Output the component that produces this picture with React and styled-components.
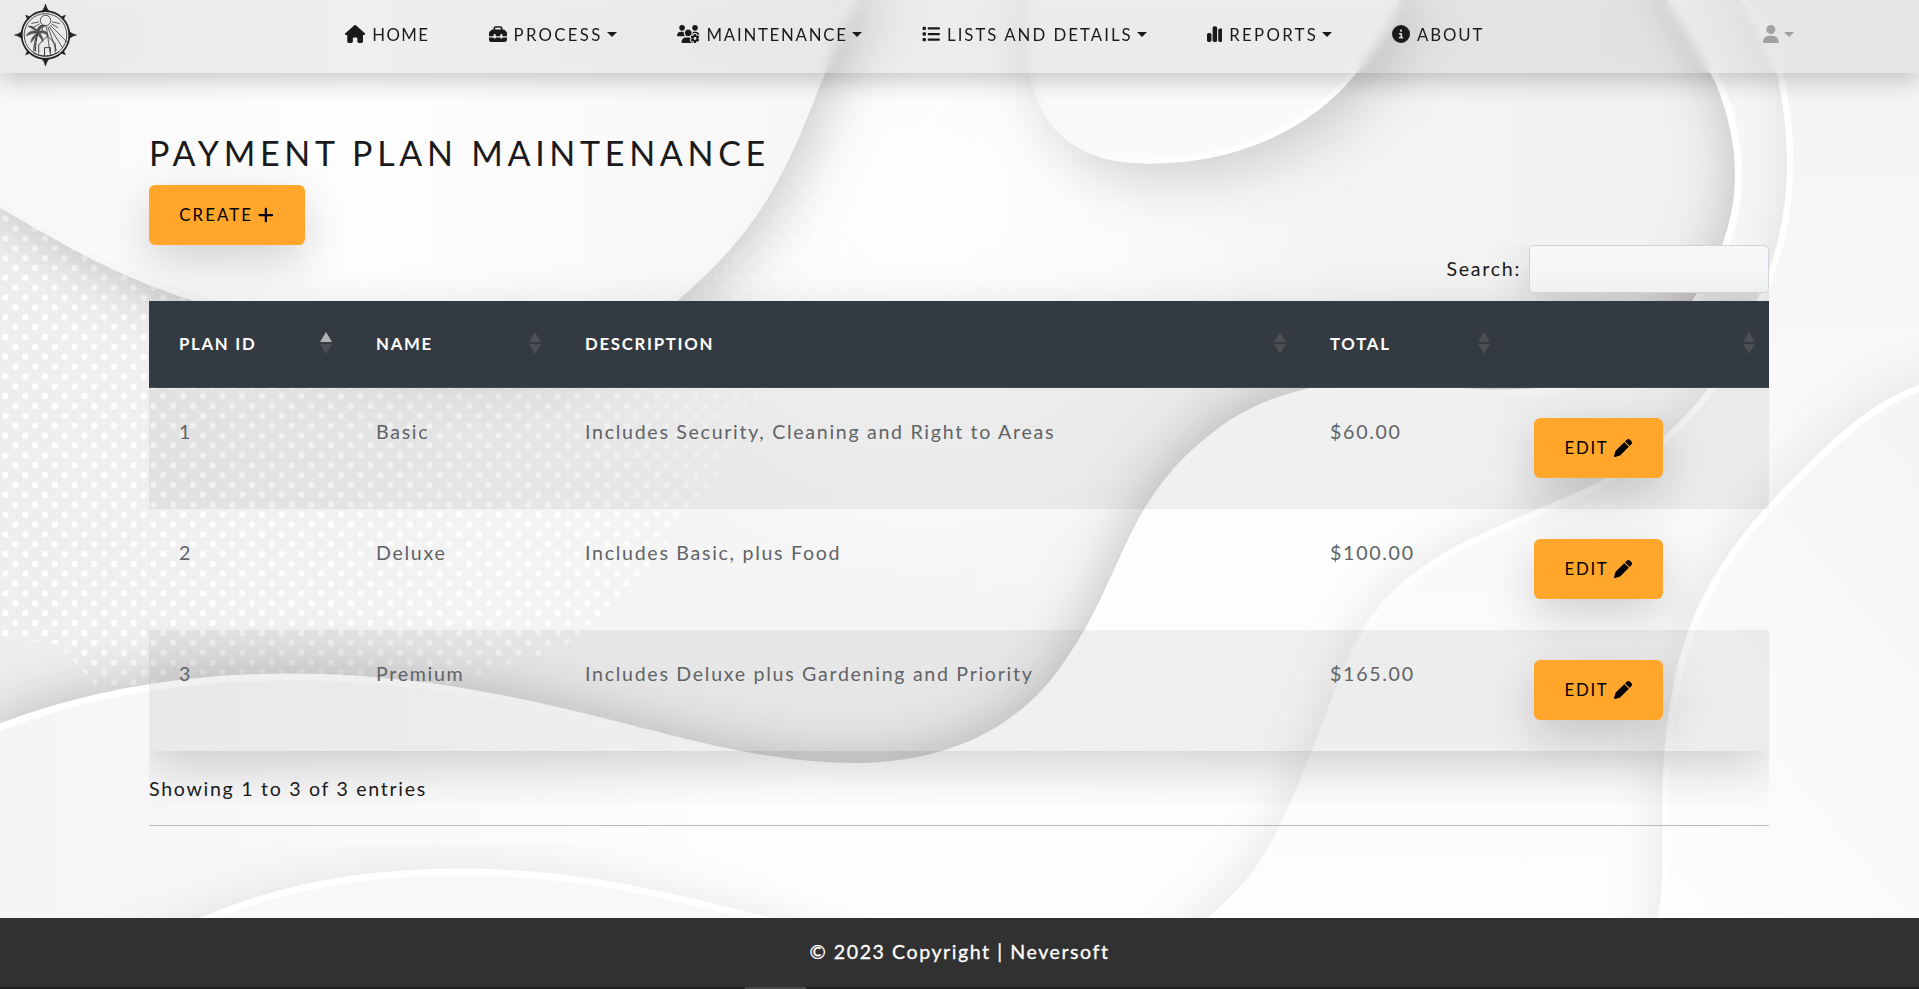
import React from "react";
import styled, { createGlobalStyle } from "styled-components";
import {
  FaHouse, FaToolbox, FaUsersGear, FaList, FaChartSimple, FaCircleInfo, FaUser, FaPlus, FaPen,
} from "react-icons/fa6";

const GlobalStyle = createGlobalStyle`
  * { box-sizing: border-box; }
  body {
    margin: 0;
    overflow: hidden;
    background: #f6f5f6;
    color: #1a1a1a;
    font-family: Lato, "Open Sans", sans-serif;
    font-size: 19.6px;
    line-height: 30px;
    letter-spacing: 1.7px;
  }
`;

const Page = styled.div`
  position: relative;
  isolation: isolate;
  display: flex;
  flex-direction: column;
  width: 1919px;
  height: 989px;
  overflow: hidden;
`;

const Backdrop = styled.svg`
  position: absolute;
  inset: 0;
  z-index: -1;
  filter { color-interpolation-filters: sRGB; }
`;

const Navbar = styled.header`
  display: flex;
  align-items: center;
  flex: none;
  height: 73px;
  padding-left: 14px;
  background: rgba(0, 0, 0, 0.06);
  backdrop-filter: blur(6px);
  box-shadow: 0 8px 22px rgba(0, 0, 0, 0.2);
`;

const Logo = styled.svg`
  display: block;
  flex: none;
  width: 63px;
  height: 64px;
  margin: 0 268px 3px 0;
`;

const NavList = styled.nav`
  display: grid;
  grid-template-columns: 143.5px 188.5px 245px 284.5px 185.5px 371px auto;
  height: 73px;
  padding-bottom: 3px;
`;

const NavItem = styled.a`
  display: flex;
  align-items: center;
  color: ${(p) => (p.$muted ? "#a1a1a1" : "#1a1a1a")};
  font-size: 16.8px;
  letter-spacing: ${(p) => p.$track || 1.7}px;
  white-space: nowrap;
  svg {
    flex: none;
    width: ${(p) => p.$icon || 18}px;
    height: 18px;
    margin: 0 ${(p) => (p.$muted ? 5 : 7)}px 2px 0;
  }
`;

const Caret = styled.span`
  margin: 0 0 1px ${(p) => (p.$tight ? 0 : 4)}px;
  border: 5px solid transparent;
  border-top-color: currentColor;
  border-bottom: 0;
`;

const Content = styled.main`
  flex: 1;
  width: 1620px;
  margin-left: 149px;
  padding-top: 60px;
`;

const Title = styled.h1`
  margin: 0;
  height: 52px;
  line-height: 40px;
  font-size: 34px;
  font-weight: 400;
  letter-spacing: 4.7px;
`;

const Button = styled.button`
  display: flex;
  align-items: center;
  justify-content: center;
  gap: ${(p) => p.$gap}px;
  width: ${(p) => p.$width}px;
  height: 60px;
  padding: 0 1px 1px 0;
  border: 0;
  border-radius: 6.4px;
  background: #ffa62b;
  color: #000;
  font: 400 16.8px Lato, sans-serif;
  letter-spacing: ${(p) => p.$track}px;
  box-shadow: 0 16px 48px rgba(0, 0, 0, 0.175);
  svg { flex: none; width: ${(p) => p.$icon}px; height: 18px; }
`;

const TableWrapper = styled.section`
  height: 560px;
  overflow: hidden;
`;

const SearchLabel = styled.label`
  display: flex;
  align-items: center;
  justify-content: flex-end;
  gap: 8px;
  height: 48px;
  margin-bottom: 8px;
  line-height: 28px;
`;

const SearchInput = styled.input`
  width: 240px;
  height: 48px;
  border: 1px solid #ced4da;
  border-radius: 5px;
  background: linear-gradient(#f6f7f9, #f5f6f8 55%, #eff0f2);
  box-shadow: 0 16px 48px rgba(0, 0, 0, 0.175);
`;

const Table = styled.table`
  width: 1620px;
  table-layout: fixed;
  border-spacing: 0;
  box-shadow: 0 16px 48px rgba(0, 0, 0, 0.175);
`;

const Th = styled.th`
  position: relative;
  width: ${(p) => p.$width}px;
  height: 87px;
  padding: 0 0 1px 30px;
  background: #343a41;
  border-bottom: 1px solid #45484e;
  color: #fff;
  text-align: left;
  font-size: 16.8px;
  font-weight: 700;
  letter-spacing: 1.7px;
`;

const SortMark = styled.span`
  position: absolute;
  right: 14px;
  top: 31px;
  display: flex;
  flex-direction: column;
  gap: 2px;
  &::before, &::after { content: ""; border: 6px solid transparent; }
  &::before { border-top: 0; border-bottom: 10px solid ${(p) => (p.$active ? "#b1b3b6" : "#4c5054")}; }
  &::after { border-bottom: 0; border-top: 10px solid #4c5054; }
`;

const Row = styled.tr`
  height: ${(p) => p.$height}px;
  background: ${(p) => (p.$odd ? "rgba(0, 0, 0, 0.055)" : "transparent")};
`;

const Td = styled.td`
  padding: ${(p) => (p.$action ? 30 : 29)}px 0 0 30px;
  vertical-align: top;
  color: #606366;
`;

const Info = styled.div`
  padding-top: 23px;
`;

const Divider = styled.hr`
  height: 1px;
  margin: 20px 0 0;
  border: 0;
  background: #b9babb;
`;

const Footer = styled.footer`
  display: flex;
  align-items: center;
  justify-content: center;
  flex: none;
  height: 69px;
  padding-bottom: 2px;
  background: rgba(41, 41, 41, 0.96);
  color: #fff;
  letter-spacing: 1.55px;
  -webkit-text-stroke: 0.3px #fff;
`;

const BottomEdge = styled.div`
  flex: none;
  height: 2px;
  padding-left: 745px;
  background: #231f20;
  &::before { content: ""; display: block; width: 61px; height: 2px; background: #4c4849; }
`;

const waveEdge =
  "M1655 -20 C1690 30 1704 58 1716 80 C1750 165 1738 235 1692 301 C1630 400 1510 395 1440 388 C1340 380 1290 384 1230 420 C1120 495 1130 570 1062 665 C1015 733 940 763 854 763 C690 763 540 674 290 674 C180 674 80 692 -10 728";
const outerEdge =
  "M1730 -20 C1760 20 1773 50 1781 78 C1800 170 1788 240 1760 301 C1725 385 1680 440 1600 485 C1520 525 1430 545 1375 615 C1335 670 1325 730 1280 825 C1262 864 1240 890 1205 920 L1120 990";
const rightEdge =
  "M1930 385 C1880 395 1830 440 1765 510 C1710 570 1683 630 1673 690 C1655 790 1668 830 1661 900 L1645 990";
const hillEdge = "M60 1010 C160 930 270 872 460 872 C600 872 700 905 800 928 L980 990";
const cornerEdge =
  "M-10 198 C70 246 130 280 212 304 C320 345 400 360 480 358 C570 356 625 345 677 301 C770 222 790 160 825 73 C840 35 848 15 872 -20";
const dropEdge = "M1030 -20 C1015 110 1060 161 1148 161 C1240 161 1310 125 1353 73 C1380 40 1395 15 1402 -20";

function Waves() {
  return (
    <Backdrop width="1919" height="989" viewBox="0 0 1919 989" fill="none">
      <defs>
        <linearGradient id="basin" x1="0" y1="0" x2="1" y2="0">
          <stop offset="0" stopColor="#efeeef" />
          <stop offset=".3" stopColor="#f5f4f5" />
          <stop offset=".6" stopColor="#f6f5f6" />
          <stop offset="1" stopColor="#f0eff0" />
        </linearGradient>
        <radialGradient id="glow" gradientUnits="userSpaceOnUse" cx="920" cy="200" r="430">
          <stop offset="0" stopColor="#fff" stopOpacity=".9" />
          <stop offset=".4" stopColor="#fff" stopOpacity=".65" />
          <stop offset="1" stopColor="#fff" stopOpacity="0" />
        </radialGradient>
        <linearGradient id="sheet" x1="0" y1="0" x2="1" y2="0">
          <stop offset="0" stopColor="#f6f4f6" />
          <stop offset=".4" stopColor="#fefefe" />
          <stop offset=".75" stopColor="#fdfdfd" />
          <stop offset="1" stopColor="#f0eff1" />
        </linearGradient>
        <linearGradient id="outer" x1="0" y1="0" x2="0" y2="1">
          <stop offset="0" stopColor="#f4f2f5" />
          <stop offset=".5" stopColor="#faf9fa" />
          <stop offset="1" stopColor="#fefefe" />
        </linearGradient>
        <linearGradient id="right" x1="1" y1="0" x2="0.3" y2="1">
          <stop offset="0" stopColor="#f4f3f5" />
          <stop offset="1" stopColor="#fdfdfd" />
        </linearGradient>
        <linearGradient id="corner" x1="0" y1="0" x2="1" y2="0">
          <stop offset="0" stopColor="#f9f8f9" />
          <stop offset=".42" stopColor="#fefefe" />
          <stop offset="1" stopColor="#f7f5f6" />
        </linearGradient>
        <linearGradient id="rimLeft" gradientUnits="userSpaceOnUse" x1="0" y1="0" x2="700" y2="0">
          <stop offset=".4" stopColor="#fff" />
          <stop offset="1" stopColor="#fff" stopOpacity="0" />
        </linearGradient>
        <linearGradient id="rimRight" gradientUnits="userSpaceOnUse" x1="1120" y1="0" x2="1300" y2="0">
          <stop offset="0" stopColor="#fff" stopOpacity="0" />
          <stop offset="1" stopColor="#fff" />
        </linearGradient>
        <linearGradient id="rimOuter" gradientUnits="userSpaceOnUse" x1="0" y1="700" x2="0" y2="560">
          <stop offset="0" stopColor="#fff" stopOpacity="0" />
          <stop offset="1" stopColor="#fff" />
        </linearGradient>
        <linearGradient id="rimDrop" gradientUnits="userSpaceOnUse" x1="1020" y1="0" x2="1180" y2="0">
          <stop offset="0" stopColor="#f6f6f6" />
          <stop offset="1" stopColor="#fff" />
        </linearGradient>
        <pattern id="dots" x="-4.4" y="-3.3" width="19.73" height="19.73" patternUnits="userSpaceOnUse">
          <circle cx="9.9" cy="4.9" r="3.1" fill="#fff" />
          <circle cx="0" cy="14.8" r="3.1" fill="#fff" />
          <circle cx="19.73" cy="14.8" r="3.1" fill="#fff" />
        </pattern>
        <linearGradient id="dotFade" gradientUnits="userSpaceOnUse" x1="640" y1="240" x2="820" y2="290">
          <stop offset="0" stopColor="#fff" />
          <stop offset="1" stopColor="#fff" stopOpacity=".5" />
        </linearGradient>
        <mask id="dotMask">
          <path d="M0 150 H880 L960 90 C900 150 870 230 830 300 L760 410 L700 500 L640 580 L560 650 L430 690 H100 L60 645 L0 635Z" fill="url(#dotFade)" />
        </mask>
        <filter id="deep" x="-20%" y="-20%" width="140%" height="140%">
          <feDropShadow dx="-4" dy="-6" stdDeviation="26" floodColor="#4a4648" floodOpacity=".28" />
        </filter>
        <filter id="mild" x="-20%" y="-20%" width="140%" height="140%">
          <feDropShadow dx="-6" dy="-6" stdDeviation="22" floodColor="#5a5260" floodOpacity=".12" />
        </filter>
        <filter id="down" x="-20%" y="-20%" width="140%" height="150%">
          <feDropShadow dx="8" dy="10" stdDeviation="28" floodColor="#444" floodOpacity=".27" />
        </filter>
        <filter id="dropShade" x="-40%" y="-40%" width="190%" height="220%">
          <feDropShadow dx="14" dy="16" stdDeviation="30" floodColor="#444" floodOpacity=".24" />
        </filter>
      </defs>
      <rect width="1919" height="989" fill="url(#basin)" />
      <rect width="1919" height="989" fill="url(#glow)" />
      <rect width="1000" height="720" fill="url(#dots)" mask="url(#dotMask)" />
      <path d={`${waveEdge} V1100 H2000 V-20Z`} fill="url(#sheet)" filter="url(#deep)" />
      <path d="M-10 731 C80 695 180 677 290 677 C540 677 690 766 854 766" stroke="url(#rimLeft)" strokeWidth="7" />
      <path d="M1655 -20 C1690 30 1704 58 1716 80 C1750 165 1738 235 1692 301 C1630 400 1510 395 1440 388 C1340 380 1290 384 1230 420 C1120 495 1130 570 1062 665" stroke="url(#rimRight)" strokeWidth="7" transform="translate(3 2)" />
      <path d={`${outerEdge} H2000 V-20Z`} fill="url(#outer)" filter="url(#mild)" />
      <path d={outerEdge} stroke="url(#rimOuter)" strokeWidth="6.5" />
      <path d={`${rightEdge} H2000 V385Z`} fill="url(#right)" filter="url(#mild)" />
      <path d={rightEdge} stroke="#fff" strokeWidth="7" transform="translate(3 0)" />
      <path d={`${hillEdge}Z`} fill="#f9f8f9" filter="url(#mild)" />
      <path d={hillEdge} stroke="#fff" strokeWidth="7" />
      <path d={`${dropEdge}Z`} fill="#fafafa" filter="url(#dropShade)" />
      <path d={dropEdge} stroke="url(#rimDrop)" strokeWidth="5.5" />
      <path d={`${cornerEdge} H-10Z`} fill="url(#corner)" filter="url(#down)" />
      <path d={cornerEdge} stroke="#f7f7f7" strokeWidth="7" transform="translate(-3 -2)" />
    </Backdrop>
  );
}

function CompassLogo() {
  const angles = [0, 90, 180, 270];
  const rays = [-78, -60, -45, -32, -20, -8, 20, 32, 45, 60, 78];
  return (
    <Logo viewBox="-32.5 -33 65 66" fill="none" stroke="#222" strokeWidth="1">
      <circle r="24.6" strokeWidth="1.8" />
      <circle r="22" strokeWidth="0.8" />
      {angles.map((a) => (
        <g key={a} transform={`rotate(${a})`}>
          <path d="M0 -32 L1.4 -28 L3.6 -24.5 H-3.6 L-1.4 -28Z" fill="#222" strokeWidth="0.5" />
          <path d="M0 -29 L1.6 -25 H-1.6Z" fill="#222" strokeWidth="0.5" transform="rotate(45)" />
        </g>
      ))}
      <circle cy="-15" r="5.4" strokeWidth="0.8" />
      {rays.map((a) => (
        <path key={a} d={Math.abs(a) > 50 ? "M0 7 V15" : a > 0 ? "M0 7 V18" : "M0 7 V33"} strokeWidth="0.7" transform={`translate(0 -15) rotate(${a})`} />
      ))}
      <path d="M-12 17 C-12 8 -10 4 -9 -1 M-10.500 17 C-10.500 9 -9 4 -8 -1" strokeWidth="1" />
      <path
        d="M-8.500 -3 C-14 -6 -18 -3 -20 1 C-16 -1 -13 -2 -8.500 -2 C-13 1 -15 4 -15 8 C-12 4 -10 2 -8 -1 C-6 2 -4 4 -3 7 C-2 3 -4 0 -7 -2 C-2 -3 0 -1 3 1 C2 -4 -3 -6 -7 -3 C-6 -7 -3 -9 1 -9 C-4 -12 -8 -9 -8.500 -4 C-11 -8 -14 -10 -18 -9 C-14 -7 -11 -5 -8.500 -3Z"
        fill="#555" strokeWidth="0.4"
      />
      <path d="M-7 19 V10 L2 1 L10 9 V18 M-1 21 V13 H5 V21 M-13 18 C-5 23 6 23 14 17" strokeWidth="0.9" />
    </Logo>
  );
}

const plans = [
  { id: 1, name: "Basic", description: "Includes Security, Cleaning and Right to Areas", total: "$60.00" },
  { id: 2, name: "Deluxe", description: "Includes Basic, plus Food", total: "$100.00" },
  { id: 3, name: "Premium", description: "Includes Deluxe plus Gardening and Priority", total: "$165.00" },
];

const columns = [
  { label: "PLAN ID", width: 197, active: true },
  { label: "NAME", width: 209 },
  { label: "DESCRIPTION", width: 745 },
  { label: "TOTAL", width: 204 },
  { label: "", width: 265 },
];

export default function App() {
  return (
    <Page>
      <GlobalStyle />
      <Waves />
      <Navbar>
        <CompassLogo />
        <NavList>
          <NavItem $icon={20.25} $track={1.4}><FaHouse />HOME</NavItem>
          <NavItem $track={2.3}><FaToolbox />PROCESS<Caret /></NavItem>
          <NavItem $icon={22.5} $track={1.75}><FaUsersGear />MAINTENANCE<Caret /></NavItem>
          <NavItem $track={2.02}><FaList />LISTS AND DETAILS<Caret /></NavItem>
          <NavItem $icon={15.75} $track={2.3}><FaChartSimple />REPORTS<Caret /></NavItem>
          <NavItem $track={1.9}><FaCircleInfo />ABOUT</NavItem>
          <NavItem $muted $icon={15.75}><FaUser /><Caret $tight /></NavItem>
        </NavList>
      </Navbar>
      <Content>
        <Title>PAYMENT PLAN MAINTENANCE</Title>
        <Button $width={156} $icon={15.75} $gap={5} $track={2.1}>CREATE <FaPlus /></Button>
        <TableWrapper>
          <SearchLabel>Search:<SearchInput type="search" /></SearchLabel>
          <Table>
            <thead>
              <tr>
                {columns.map((c) => (
                  <Th key={c.width} $width={c.width}>{c.label}<SortMark $active={c.active} /></Th>
                ))}
              </tr>
            </thead>
            <tbody>
              {plans.map((p) => (
                <Row key={p.id} $height={121} $odd={p.id % 2 === 1}>
                  <Td>{p.id}</Td>
                  <Td>{p.name}</Td>
                  <Td>{p.description}</Td>
                  <Td>{p.total}</Td>
                  <Td $action><Button $width={129} $icon={18} $gap={5} $track={1.75}>EDIT <FaPen /></Button></Td>
                </Row>
              ))}
            </tbody>
          </Table>
          <Info>Showing 1 to 3 of 3 entries</Info>
        </TableWrapper>
        <Divider />
      </Content>
      <Footer>© 2023 Copyright | Neversoft</Footer>
      <BottomEdge />
    </Page>
  );
}
